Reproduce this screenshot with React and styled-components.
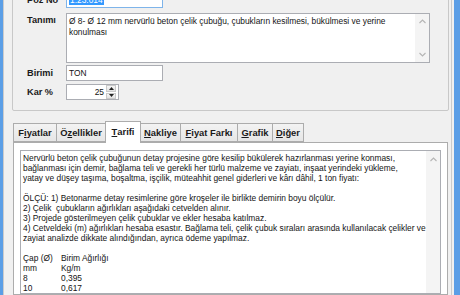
import React from "react";
import styled, { createGlobalStyle } from "styled-components";

const Global = createGlobalStyle`
  html, body { margin: 0; padding: 0; background: #f0f0f0; }
  body { font-family: "Liberation Sans", Arial, sans-serif; }
  #root { width: 460px; height: 295px; overflow: hidden; }
`;

const Window = styled.div`
  width: 460px;
  height: 295px;
  overflow: hidden;
  box-sizing: border-box;
  background: #f0f0f0;
  border-left: 3px solid #5b9ee6;
  border-right: 6px solid #5b9ee6;
  display: flex;
`;

const Client = styled.div`
  flex: 1;
  min-width: 0;
  border-left: 1px solid #cbcbcb;
  border-right: 1px solid #cbcbcb;
  margin-right: 2px;
  display: flex;
  flex-direction: column;
`;

const Group = styled.div`
  margin: -22px 2px 0 8px;
  border: 1px solid #c8c8c8;
  border-radius: 2px;
  padding: 13px 0 10px 14px;
  display: flex;
  flex-direction: column;
  flex-shrink: 0;
`;

const FieldRow = styled.div`
  display: flex;
  align-items: ${(p) => (p.$top ? "flex-start" : "center")};
  margin-top: ${(p) => p.$mt || 0}px;
`;

const Label = styled.div`
  width: 39px;
  flex-shrink: 0;
  font-size: 9.2px;
  font-weight: bold;
  color: #1a1a1a;
  padding-top: ${(p) => (p.$top ? 2 : 0)}px;
`;

const Input = styled.div`
  box-sizing: border-box;
  width: ${(p) => p.$w}px;
  height: ${(p) => p.$h || 16}px;
  border: 1px solid ${(p) => (p.$focus ? "#7eb4ea" : "#abadb3")};
  background: #fff;
  font-size: 8.4px;
  color: #111;
  display: flex;
  align-items: center;
  padding: 0 2px;
  justify-content: ${(p) => (p.$right ? "flex-end" : "flex-start")};
`;

const Selected = styled.span`
  background: #3399ff;
  color: #fff;
  padding: 0 1px;
`;

const Memo = styled.div`
  box-sizing: border-box;
  width: ${(p) => p.$w}px;
  height: ${(p) => (p.$h ? p.$h + "px" : "auto")};
  flex: ${(p) => (p.$h ? "none" : "1")};
  border: 1px solid #abadb3;
  background: #fff;
  display: flex;
  min-height: 0;
`;

const MemoText = styled.div`
  flex: 1;
  padding: 2px;
  font-size: 8.4px;
  color: #141414;
  white-space: pre;
  overflow: hidden;
`;

const Line = styled.div`
  height: ${(p) => p.$lh || 10}px;
  line-height: ${(p) => p.$lh || 10}px;
`;

const ScrollBar = styled.div`
  width: 14px;
  flex-shrink: 0;
  background: #f4f4f4;
  display: flex;
  flex-direction: column;
  justify-content: ${(p) => (p.$single ? "flex-start" : "space-between")};
  align-items: center;
  padding: ${(p) => p.$pad};
`;

const Spin = styled.div`
  width: 10px;
  height: 14px;
  margin-left: 2px;
  display: flex;
  flex-direction: column;
  gap: 1px;
`;

const SpinBtn = styled.div`
  flex: 1;
  background: linear-gradient(#f6f6f6, #e2e2e2);
  border: 1px solid #c9c9c9;
  box-sizing: border-box;
  display: flex;
  align-items: center;
  justify-content: center;
`;

const TabStrip = styled.div`
  display: flex;
  align-items: flex-end;
  margin: 10px 0 0 9px;
  height: 21px;
  flex-shrink: 0;
  position: relative;
  z-index: 1;
`;

const Tab = styled.div`
  box-sizing: border-box;
  width: ${(p) => p.$w}px;
  height: ${(p) => (p.$active ? 22 : 19)}px;
  margin-bottom: ${(p) => (p.$active ? -1 : 0)}px;
  margin-left: -1px;
  border: 1px solid #acacac;
  border-bottom: ${(p) => (p.$active ? "none" : "1px solid #acacac")};
  background: ${(p) => (p.$active ? "#ffffff" : "linear-gradient(#f3f3f3, #e6e6e6)")};
  font-size: 9.4px;
  font-weight: bold;
  color: #1a1a1a;
  display: flex;
  align-items: center;
  justify-content: center;
  padding-bottom: ${(p) => (p.$active ? 2 : 0)}px;
  &:first-child { margin-left: 0; }
  u { text-decoration: underline; text-underline-offset: 1px; }
`;

const Panel = styled.div`
  flex: 1;
  min-height: 0;
  margin: 0 3px 0 9px;
  border: 1px solid #acacac;
  background: #ffffff;
  padding: 7px 5px 0 6px;
  display: flex;
  flex-direction: column;
`;

const TableRow = styled(Line)`
  display: grid;
  grid-template-columns: 38px auto;
`;

const Chevron = ({ up, color = "#b5b5b5" }) => (
  <svg width="7" height="5" viewBox="0 0 7 5">
    <polyline
      points={up ? "0.5,4 3.5,1 6.5,4" : "0.5,1 3.5,4 6.5,1"}
      fill="none"
      stroke={color}
      strokeWidth="1.1"
    />
  </svg>
);

const Tri = ({ up }) => (
  <svg width="5" height="3" viewBox="0 0 5 3">
    <polygon points={up ? "2.5,0 5,3 0,3" : "0,0 5,0 2.5,3"} fill="#222" />
  </svg>
);

const tanim = [
  "Ø 8- Ø 12 mm nervürlü beton çelik çubuğu, çubukların kesilmesi, bükülmesi ve yerine",
  "konulması",
];

const tarif = [
  "Nervürlü beton çelik çubuğunun detay projesine göre kesilip bükülerek hazırlanması yerine konması,",
  "bağlanması için demir, bağlama teli ve gerekli her türlü malzeme ve zayiatı, inşaat yerindeki yükleme,",
  "yatay ve düşey taşıma, boşaltma, işçilik, müteahhit genel giderleri ve kârı dâhil, 1 ton fiyatı:",
  "",
  "ÖLÇÜ: 1) Betonarme detay resimlerine göre kroşeler ile birlikte demirin boyu ölçülür.",
  "2) Çelik  çubukların ağırlıkları aşağıdaki cetvelden alınır.",
  "3) Projede gösterilmeyen çelik çubuklar ve ekler hesaba katılmaz.",
  "4) Cetveldeki (m) ağırlıkları hesaba esastır. Bağlama teli, çelik çubuk sıraları arasında kullanılacak çelikler ve",
  "zayiat analizde dikkate alındığından, ayrıca ödeme yapılmaz.",
  "",
];

const weights = [
  ["Çap (Ø)", "Birim Ağırlığı"],
  ["mm", "Kg/m"],
  ["8", "0,395"],
  ["10", "0,617"],
];

const tabs = [
  { w: 44, pre: "F", u: "i", post: "yatlar" },
  { w: 50, pre: "Ö", u: "z", post: "ellikler" },
  { w: 36, pre: "", u: "T", post: "arifi", active: true },
  { w: 41, pre: "", u: "N", post: "akliye" },
  { w: 58, pre: "", u: "F", post: "iyat Farkı" },
  { w: 36, pre: "", u: "G", post: "rafik" },
  { w: 32, pre: "", u: "D", post: "iğer" },
];

export default function App() {
  return (
    <>
      <Global />
      <Window>
        <Client>
          <Group>
            <FieldRow>
              <Label>Poz No</Label>
              <Input $w={97} $focus>
                <Selected>1.23.014</Selected>
              </Input>
            </FieldRow>
            <FieldRow $top $mt={5}>
              <Label $top>Tanımı</Label>
              <Memo $w={364} $h={50}>
                <MemoText>
                  {tanim.map((l, i) => (
                    <Line key={i} $lh={10.6}>{l}</Line>
                  ))}
                </MemoText>
                <ScrollBar $pad="5px 0 5px">
                  <Chevron up />
                  <Chevron />
                </ScrollBar>
              </Memo>
            </FieldRow>
            <FieldRow $mt={2}>
              <Label>Birimi</Label>
              <Input $w={97}>TON</Input>
            </FieldRow>
            <FieldRow $mt={3}>
              <Label>Kar %</Label>
              <Input $w={53} $right>
                25
                <Spin>
                  <SpinBtn>
                    <Tri up />
                  </SpinBtn>
                  <SpinBtn>
                    <Tri />
                  </SpinBtn>
                </Spin>
              </Input>
            </FieldRow>
          </Group>
          <TabStrip>
            {tabs.map((t, i) => (
              <Tab key={i} $w={t.w} $active={t.active}>
                {t.pre}
                <u>{t.u}</u>
                {t.post}
              </Tab>
            ))}
          </TabStrip>
          <Panel>
            <Memo $w={421}>
              <MemoText>
                {tarif.map((l, i) => (
                  <Line key={i}>{l || "\u00a0"}</Line>
                ))}
                {weights.map((r, i) => (
                  <TableRow key={i}>
                    <span>{r[0]}</span>
                    <span>{r[1]}</span>
                  </TableRow>
                ))}
              </MemoText>
              <ScrollBar $single $pad="6px 0 0">
                <Chevron up />
              </ScrollBar>
            </Memo>
          </Panel>
        </Client>
      </Window>
    </>
  );
}
